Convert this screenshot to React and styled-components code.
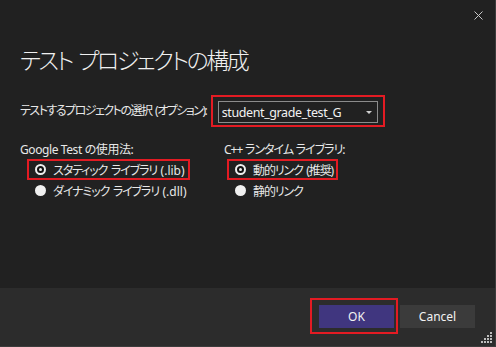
import React from 'react';
import styled, {createGlobalStyle} from 'styled-components';

const GlobalStyle = createGlobalStyle`
  html, body {
    margin: 0;
    padding: 0;
    background: #212121;
  }
  body {
    font-family: "Noto Sans", "Noto Sans CJK JP", sans-serif;
    font-feature-settings: "palt";
    color: #e8e8e8;
  }
`

const Dialog = styled.div`
  width: 495px;
  height: 346px;
  display: flex;
  flex-direction: column;
  border-right: 1px solid #3c3c3c;
  border-bottom: 1px solid #3c3c3c;
  background: #212121;
  position: relative;
`

const TopBar = styled.div`
  height: 30px;
  display: flex;
  justify-content: flex-end;
  align-items: center;
  padding-right: 12px;
`

const CloseButton = styled.div`
  width: 10px;
  height: 10px;
  display: flex;
  align-items: center;
  justify-content: center;
`

const Content = styled.div`
  flex: 1;
  padding: 14px 20px 0 20px;
`

const Title = styled.h1`
  margin: 0;
  font-size: 23px;
  font-weight: 300;
  line-height: 32px;
  letter-spacing: -2.5px;
  word-spacing: 3px;
  color: #f0f0f0;
`

const ProjectRow = styled.div`
  display: flex;
  align-items: center;
  margin-top: 19px;
`

const Label = styled.span`
  font-size: 12px;
  line-height: 16px;
  letter-spacing: ${p => p.$spacing || '-1.2px'};
  word-spacing: ${p => p.$words || '1px'};
`

const Highlight = styled.div`
  display: inline-flex;
  align-items: center;
  border: 2px solid #e31b23;
  padding: ${p => p.$pad || '0'};
  margin: ${p => p.$margin || '0'};
`

const Select = styled.div`
  width: 160px;
  height: 22px;
  border: 1px solid #8c8c8c;
  display: flex;
  align-items: center;
  justify-content: space-between;
  padding: 0 5px 0 3px;
  box-sizing: border-box;
  font-size: 12.5px;
  letter-spacing: -0.4px;
  color: #f2f2f2;
`

const Caret = styled.span`
  width: 0;
  height: 0;
  border-left: 3px solid transparent;
  border-right: 3px solid transparent;
  border-top: 3px solid #cfcfcf;
`

const Columns = styled.div`
  display: grid;
  grid-template-columns: 204px 1fr;
  margin-top: 15px;
`

const Group = styled.div`
  display: flex;
  flex-direction: column;
  align-items: flex-start;
`

const Option = styled.div`
  display: flex;
  align-items: center;
  gap: 7px;
  height: 15px;
  font-size: 12px;
  letter-spacing: -1.1px;
  word-spacing: 1.5px;
  padding: 0 3px 0 6px;
  margin: ${p => p.$margin || '0'};
`

const Latin = styled.span`
  letter-spacing: 0;
`

const Radio = styled.span`
  width: 11px;
  height: 11px;
  border-radius: 50%;
  box-sizing: border-box;
  background: ${p => p.$checked ? '#111' : '#f0f0f0'};
  border: ${p => p.$checked ? '2.5px solid #f0f0f0' : 'none'};
  display: flex;
  align-items: center;
  justify-content: center;
  &::after {
    content: '';
    display: ${p => p.$checked ? 'block' : 'none'};
    width: 3px;
    height: 3px;
    border-radius: 50%;
    background: #f0f0f0;
  }
`

const Footer = styled.div`
  height: 58px;
  background: #2c2c2c;
  display: flex;
  justify-content: flex-end;
  align-items: flex-start;
  padding: 10px 20px 0 0;
  box-sizing: border-box;
`

const Button = styled.div`
  width: 75px;
  height: 23px;
  display: flex;
  align-items: center;
  justify-content: center;
  font-size: 12px;
  color: #f2f2f2;
  margin-top: ${p => p.$offset || '0'};
  background: ${p => p.$primary ? '#40367f' : '#3b3b3b'};
`

const Grip = styled.svg`
  position: absolute;
  right: 2px;
  bottom: 2px;
`

function RadioOption({checked, margin, children}) {
    return (
        <Option $margin={margin}>
            <Radio $checked={checked}/>
            <span>{children}</span>
        </Option>
    )
}

export default function App() {
    const gripDots = []
    for (let r = 0; r < 4; r++) {
        for (let c = 3 - r; c < 4; c++) {
            gripDots.push(<rect key={`${r}-${c}`} x={c * 3} y={r * 3} width="2" height="2" fill="#bdbdbd"/>)
        }
    }
    return (
        <Dialog>
            <GlobalStyle/>
            <TopBar>
                <CloseButton>
                    <svg width="9" height="9" viewBox="0 0 9 9">
                        <path d="M0.5 0.5 L8.5 8.5 M8.5 0.5 L0.5 8.5" stroke="#c8c8c8" strokeWidth="1"/>
                    </svg>
                </CloseButton>
            </TopBar>
            <Content>
                <Title>テスト プロジェクトの構成</Title>
                <ProjectRow>
                    <Label $spacing="-1.5px" $words="2px">テストするプロジェクトの選択 (オプション)<Latin>:</Latin></Label>
                    <Highlight $pad="4px 5px 2px 5px" $margin="0 0 0 3px">
                        <Select>
                            <span>student_grade_test_G</span>
                            <Caret/>
                        </Select>
                    </Highlight>
                </ProjectRow>
                <Columns>
                    <Group>
                        <Label $spacing="-0.4px" $words="0">Google Test の使用法:</Label>
                        <Highlight $pad="1px 0" $margin="1px 0 0 7px">
                            <RadioOption checked>スタティック ライブラリ <Latin>(.lib)</Latin></RadioOption>
                        </Highlight>
                        <RadioOption margin="3px 0 0 9px">ダイナミック ライブラリ <Latin>(.dll)</Latin></RadioOption>
                    </Group>
                    <Group>
                        <Label $spacing="-1px" $words="0.5px">C++ ランタイム ライブラリ:</Label>
                        <Highlight $pad="1px 0" $margin="1px 0 0 3px">
                            <RadioOption checked>動的リンク (推奨)</RadioOption>
                        </Highlight>
                        <RadioOption margin="3px 0 0 5px">静的リンク</RadioOption>
                    </Group>
                </Columns>
            </Content>
            <Footer>
                <Highlight $pad="5px 2px 4px 7px" $margin="0 2px 0 0">
                    <Button $primary>OK</Button>
                </Highlight>
                <Button $offset="7px">Cancel</Button>
            </Footer>
            <Grip width="12" height="12" viewBox="0 0 12 12">{gripDots}</Grip>
        </Dialog>
    )
}
